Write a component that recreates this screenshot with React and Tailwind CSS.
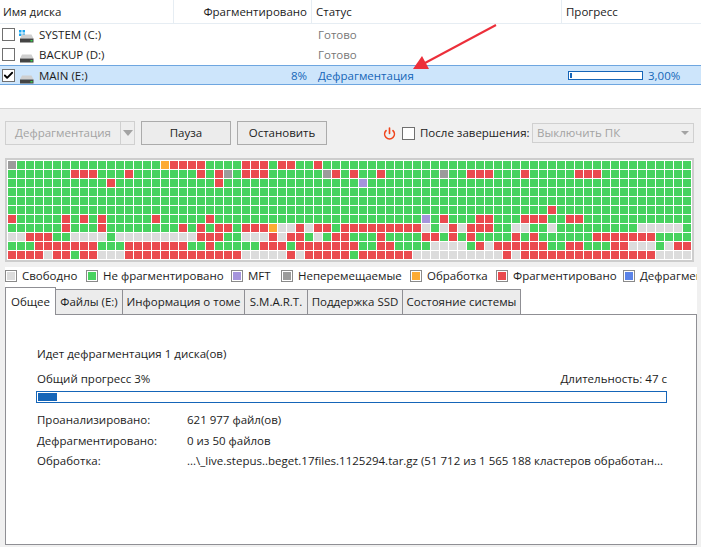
import { Power, Check } from 'lucide-react'

const COLS = 76
// cluster map: everything is green unless listed (single index or [from, to])
const mapRows = [
  { u: [0], o: [17], r: [[18, 21], [26, 28], [30, 31], 34] },
  { r: [[7, 9], 13, 21, 23, [26, 28], 36, 38, 41, [51, 53], 57, [63, 65]], u: [24, 35, 48] },
  { r: [11, 23], p: [39] },
  {},
  {},
  { r: [60] },
  { r: [0, 6, 8, 10, 16, 22, 48, [52, 53], [57, 59], [62, 63]], p: [46] },
  { r: [6, 10, 19, 21, [23, 24], [26, 28], 32, [34, 35], [37, 45], 49, [51, 53]], o: [29], f: [[30, 31], 33, 46, 48, 50, [56, 57], 60, [70, 74]] },
  { f: [[0, 1], [7, 10], [12, 20], [26, 28], 30, 34], r: [[2, 4], [21, 23], 29, [31, 32], [36, 37], 41, [46, 47], 49, 51, 56, 58, [65, 71]] },
  { r: [[3, 9], [13, 19], 22, [28, 30], [32, 38], [41, 42], 52, [54, 59], [62, 63], [67, 68], [74, 75]], f: [[47, 50], 53, [69, 71], 73] },
  { r: [[0, 3], [5, 6], [8, 9], [13, 25], 31, [33, 37], [39, 44], 55, [57, 71]], f: [4, [10, 12], [26, 30], 32, [45, 54], 56, [72, 75]], g: [7, 38] },
]

const cellColor = {
  g: 'bg-[#48d25f]',
  r: 'bg-[#ea4a4f]',
  f: 'bg-[#dcdcdc]',
  p: 'bg-[#a594dc]',
  u: 'bg-[#9b9b9b]',
  o: 'bg-[#fdab33]',
}

function buildRow(spec) {
  const row = Array(COLS).fill('g')
  Object.entries(spec).forEach(([kind, items]) => {
    items.forEach(item => {
      const [from, to] = Array.isArray(item) ? item : [item, item]
      for (let i = from; i <= to; i++) row[i] = kind
    })
  })
  return row
}

const legend = [
  { label: 'Свободно', color: 'bg-[#dcdcdc]', width: 'w-[81px]' },
  { label: 'Не фрагментировано', color: 'bg-[#48d25f]', width: 'w-[145px]' },
  { label: 'MFT', color: 'bg-[#a594dc]', width: 'w-[50px]' },
  { label: 'Неперемещаемые', color: 'bg-[#9b9b9b]', width: 'w-[129px]' },
  { label: 'Обработка', color: 'bg-[#fdab33]', width: 'w-[86px]' },
  { label: 'Фрагментировано', color: 'bg-[#ea4a4f]', width: 'w-[127px]' },
  { label: 'Дефрагментировано', color: 'bg-[#5b83e8]', width: 'w-[74px] overflow-hidden' },
]

const tabs = [
  { label: 'Файлы (E:)', width: 'w-[68px]' },
  { label: 'Информация о томе', width: 'w-[123px]' },
  { label: 'S.M.A.R.T.', width: 'w-[64px]' },
  { label: 'Поддержка SSD', width: 'w-[96px]' },
  { label: 'Состояние системы', width: 'w-[119px]' },
]

function Box({ checked }) {
  return (
    <span className="w-[13px] h-[13px] shrink-0 border border-[#707070] bg-white flex items-center justify-center">
      {checked && <Check size={11} strokeWidth={4} className="text-black" />}
    </span>
  )
}

function DiskIcon({ system }) {
  return (
    <svg width="16" height="16" viewBox="0 0 16 16" className="shrink-0">
      {system && (
        <g fill="#1ea7f0">
          <rect x="0" y="3" width="2.5" height="2.5" />
          <rect x="3.5" y="3" width="2.5" height="2.5" />
          <rect x="0" y="6.5" width="2.5" height="2.5" />
          <rect x="3.5" y="6.5" width="2.5" height="2.5" />
        </g>
      )}
      <path d="M3 7.5h9.5l2 4H1z" fill="#cfcfcf" />
      <rect x="1" y="11.5" width="13.5" height="4" fill="#444" />
      <rect x="11.5" y="13" width="2" height="1.5" fill="#37d24a" />
    </svg>
  )
}

function DiskRow({ name, system, checked, selected, frag, status, progress }) {
  return (
    <div className={`flex items-center h-5 pt-[1px] ${selected ? 'bg-[#cde5fb] border-y border-[#6ea6e0]' : ''}`}>
      <div className="w-[173px] flex items-center pl-[2px] gap-[4px] shrink-0">
        <Box checked={checked} />
        <DiskIcon system={system} />
        <span className="text-[#1c1c1c]">{name}</span>
      </div>
      <div className="w-[134px] text-right text-[#1565b8] shrink-0">{frag}</div>
      <div className={`pl-[11px] w-[254px] shrink-0 ${selected ? 'text-[#1565b8]' : 'text-[#777]'}`}>{status}</div>
      {progress && (
        <div className="flex items-center pl-[7px] gap-[5px] text-[#1565b8]">
          <div className="w-[75px] h-[9px] border border-[#1565b8] bg-white p-[1px]">
            <div className="h-full bg-[#1565b8] w-[3%] min-w-[2px]" />
          </div>
          {progress}
        </div>
      )}
    </div>
  )
}

function Btn({ children, width }) {
  return (
    <button className={`${width} h-[24px] bg-[#ececec] border border-[#ababab] text-[#1c1c1c]`}>{children}</button>
  )
}

export default function App() {
  return (
    <div className="w-[701px] h-[547px] overflow-hidden relative bg-[#f0f0f0] text-[11.5px] leading-[16px] text-[#1c1c1c] font-['Open_Sans','Noto_Sans',sans-serif]">
      {/* Disk list */}
      <div className="bg-white h-[108px] border-b border-[#d4d4d4] box-content">
        <div className="flex h-6 border-b border-[#e6edf3] items-center">
          <div className="w-[174px] h-full pl-[3px] pt-[1px] flex items-center border-r border-[#e6edf3]">Имя диска</div>
          <div className="w-[138px] h-full pr-[4px] pt-[1px] flex items-center justify-end border-r border-[#e6edf3]">Фрагментировано</div>
          <div className="w-[250px] h-full pl-[4px] pt-[1px] flex items-center border-r border-[#e6edf3]">Статус</div>
          <div className="pl-[4px] pt-[1px]">Прогресс</div>
        </div>
        <DiskRow name="SYSTEM (C:)" system status="Готово" />
        <DiskRow name="BACKUP (D:)" status="Готово" />
        <div className="h-[1px]" />
        <DiskRow name="MAIN (E:)" checked selected frag="8%" status="Дефрагментация" progress="3,00%" />
      </div>

      {/* Toolbar */}
      <div className="flex items-center h-[24px] mt-[12px] pl-[5px]">
        <div className="flex w-[130px] h-[24px] border border-[#d0d0d0] bg-[#eeeeee] text-[#a3a3a3]">
          <div className="w-[115px] flex items-center justify-center border-r border-[#d0d0d0]">Дефрагментация</div>
          <div className="flex-1 flex items-center justify-center">
            <span className="w-0 h-0 border-x-[5px] border-x-transparent border-t-[6px] border-t-[#a3a3a3]" />
          </div>
        </div>
        <div className="ml-[6px]"><Btn width="w-[90px]">Пауза</Btn></div>
        <div className="ml-[6px]"><Btn width="w-[90px]">Остановить</Btn></div>
        <Power size={13} strokeWidth={3} className="ml-[56px] text-[#f0451c]" />
        <div className="ml-[6px]"><Box /></div>
        <span className="ml-[5px] w-[112px] whitespace-nowrap">После завершения:</span>
        <div className="w-[162px] h-[20px] border border-[#d0d0d0] bg-[#eeeeee] text-[#a3a3a3] flex items-center justify-between pl-[4px] pr-[4px]">
          Выключить ПК
          <span className="w-0 h-0 border-x-[4px] border-x-transparent border-t-[4px] border-t-[#a3a3a3]" />
        </div>
      </div>

      {/* Cluster map */}
      <div className="mt-[13px] ml-[5px] w-[689px] h-[104px] border-2 border-[#cdcdcd] bg-white pt-[1px] pl-[1px]">
        {mapRows.map((spec, r) => (
          <div key={r} className="flex gap-[1px] mb-[1px]">
            {buildRow(spec).map((kind, c) => (
              <span key={c} className={`w-[8px] h-[8px] shrink-0 ${cellColor[kind]}`} />
            ))}
          </div>
        ))}
      </div>

      {/* Legend, tabs and tab body share one white sheet */}
      <div className="mt-[5px] ml-[5px] w-[692px] bg-white">
        <div className="h-[17px] flex items-center overflow-hidden">
          {legend.map(item => (
            <div key={item.label} className={`flex items-center gap-[5px] shrink-0 ${item.width}`}>
              <span className={`w-[12px] h-[12px] shrink-0 border border-[#8a8a8a] outline-1 -outline-offset-2 outline-white ${item.color}`} />
              <span className="whitespace-nowrap">{item.label}</span>
            </div>
          ))}
        </div>

        <div className="flex mt-[3px] h-[28px] items-end relative z-10 -mb-[1px]">
          <div className="w-[51px] h-[28px] bg-white border border-b-0 border-[#8f8f94] flex items-center justify-center">Общее</div>
          {tabs.map(t => (
            <div key={t.label} className={`${t.width} h-[26px] -ml-[1px] bg-[#ececec] border border-[#8f8f94] flex items-center justify-center whitespace-nowrap`}>
              {t.label}
            </div>
          ))}
        </div>

        <div className="h-[231px] bg-white border border-[#8f8f94] pl-[31px] pr-[29px] pt-[31px]">
          <div>Идет дефрагментация 1 диска(ов)</div>
          <div className="flex justify-between mt-[9px]">
            <span>Общий прогресс 3%</span>
            <span>Длительность: 47 с</span>
          </div>
          <div className="mt-[4px] -ml-[1px] h-[12px] border border-[#1565b8] p-[1px]">
            <div className="h-full w-[3%] bg-[#1565b8]" />
          </div>
          <div className="mt-[9px] grid grid-cols-[150px_1fr] gap-y-[4.5px]">
            <span>Проанализировано:</span>
            <span>621 977 файл(ов)</span>
            <span>Дефрагментировано:</span>
            <span>0 из 50 файлов</span>
            <span>Обработка:</span>
            <span className="whitespace-nowrap">...\_live.stepus..beget.17files.1125294.tar.gz (51 712 из 1 565 188 кластеров обработан...</span>
          </div>
        </div>
      </div>

      {/* Annotation arrow */}
      <svg className="absolute left-[405px] top-[20px]" width="100" height="55" viewBox="0 0 100 55">
        <path d="M91 5L20 43" stroke="#ec2f3a" strokeWidth="2" fill="none" />
        <path d="M8 49L17 36L24 49Z" fill="#ec2f3a" />
      </svg>
    </div>
  )
}
